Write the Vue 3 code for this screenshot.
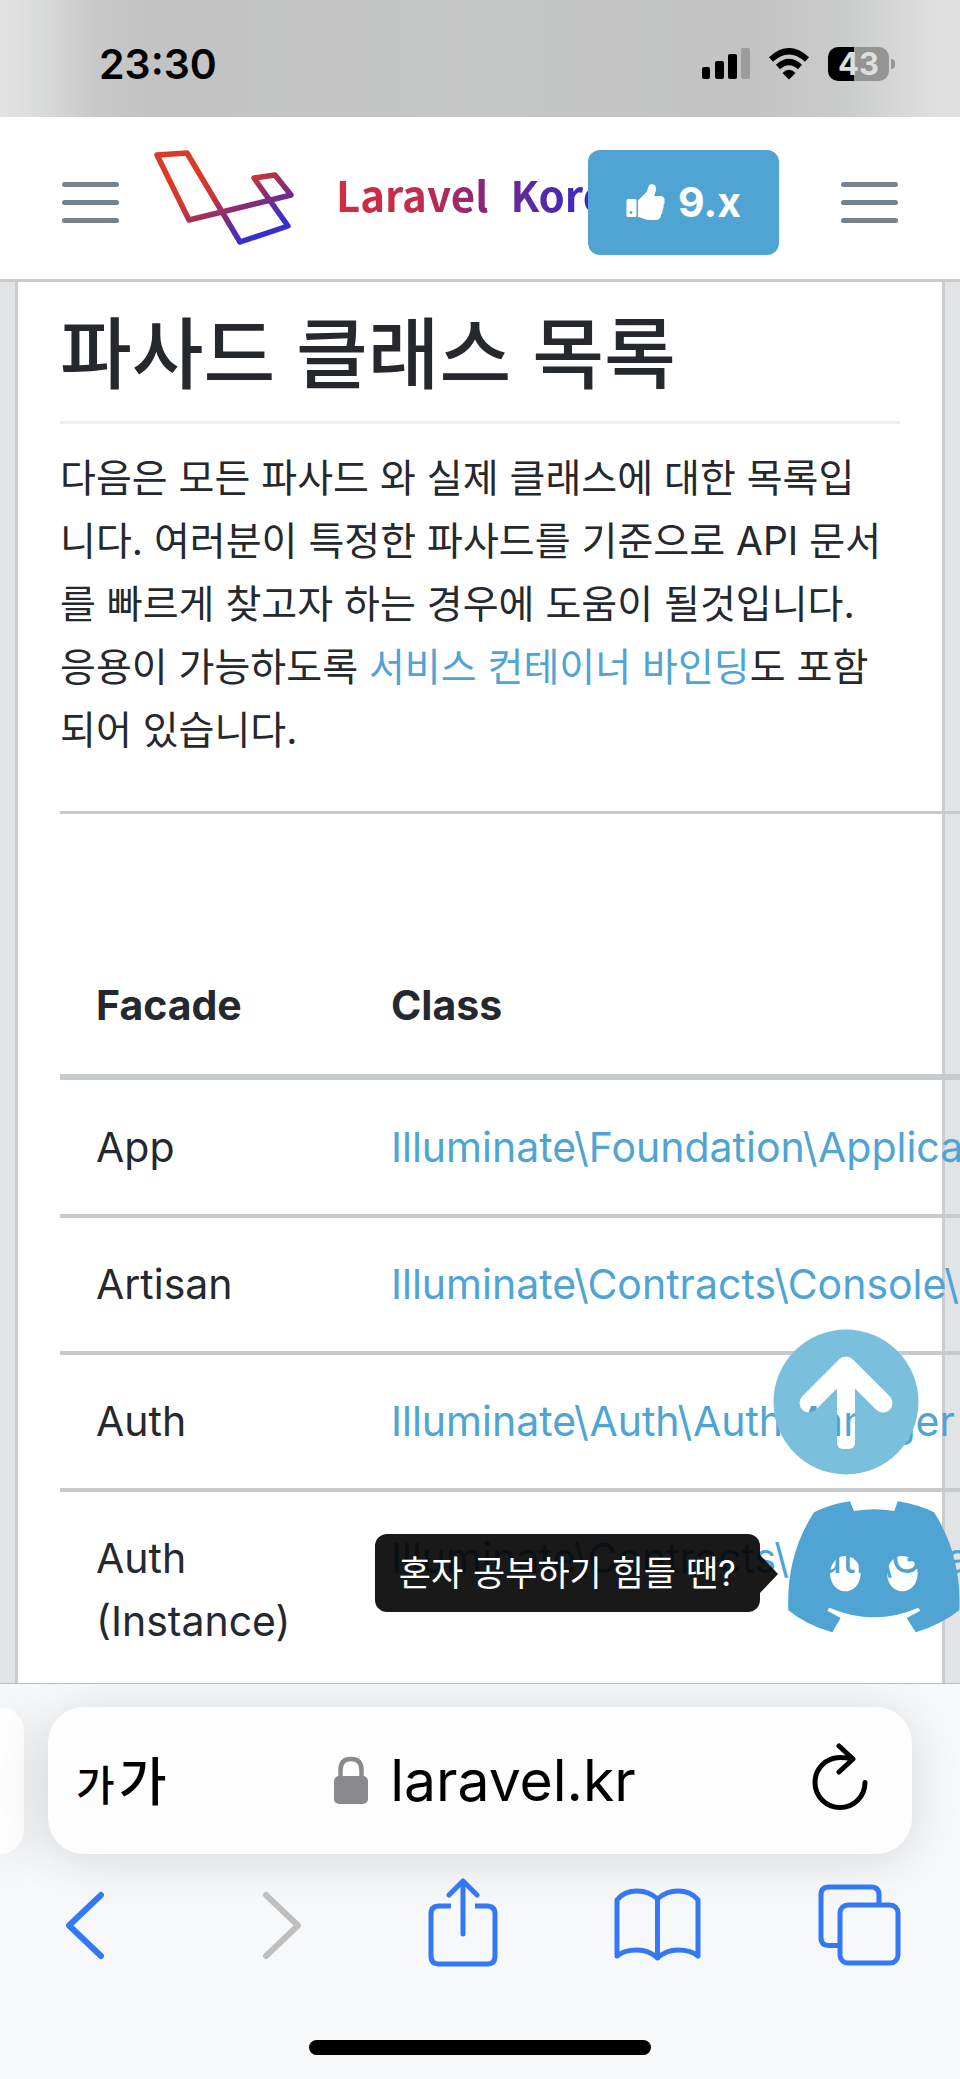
<script setup>
const rows = [
  { facade: 'App', target: 'Illuminate\\Foundation\\Application' },
  { facade: 'Artisan', target: 'Illuminate\\Contracts\\Console\\Kernel' },
  { facade: 'Auth', target: 'Illuminate\\Auth\\AuthManager' },
  { facade: 'Auth (Instance)', target: 'Illuminate\\Contracts\\Auth\\Guard' },
]
</script>

<template>
  <div class="phone">
    <div class="status">
      <span class="time">23:30</span>
      <div class="status-icons">
        <svg width="48" height="32" viewBox="0 0 48 32" aria-hidden="true">
          <rect x="0" y="19" width="8" height="12" rx="2" />
          <rect x="13" y="13" width="9" height="18" rx="2" />
          <rect x="26" y="6" width="9" height="25" rx="2" />
          <rect x="39" y="0" width="9" height="31" rx="2" fill="#9b9c9b" />
        </svg>
        <svg width="42" height="32" viewBox="0 0 42 32" aria-hidden="true">
          <path d="M3 11.500Q21 -5 39 11.500" fill="none" stroke="#000" stroke-width="6" />
          <path d="M10 19Q21 9 32 19" fill="none" stroke="#000" stroke-width="6" />
          <path d="M14.500 25Q21 18.500 27.500 25L21 31.500Z" />
        </svg>
        <span class="battery">43</span>
      </div>
    </div>

    <header class="nav">
      <button class="menu" type="button" aria-label="메뉴">
        <span></span><span></span><span></span>
      </button>
      <a class="brand" href="#">
        <svg width="142" height="98" viewBox="153 149 142 98" aria-hidden="true">
          <defs>
            <linearGradient id="logo-ink" gradientUnits="userSpaceOnUse" x1="215" y1="165" x2="250" y2="236">
              <stop offset="0" stop-color="#dc3a28" />
              <stop offset="0.350" stop-color="#c8353a" />
              <stop offset="0.650" stop-color="#822c78" />
              <stop offset="1" stop-color="#3730c8" />
            </linearGradient>
          </defs>
          <path d="M157 155L187 153L240 242L288 226L254 178L275 175L291 195L189 220Z" fill="none" stroke="url(#logo-ink)" stroke-width="5.500" stroke-linejoin="round" />
        </svg>
        <span class="wordmark"><span>Laravel</span><span>Korea</span></span>
      </a>
      <button class="version" type="button">
        <svg width="40" height="38" viewBox="0 0 40 38" aria-hidden="true">
          <path fill="#fff" fill-rule="evenodd" d="M2 16h7q1.500 0 1.500 1.500v15q0 1.500-1.500 1.500h-7q-1.500 0-1.500-1.500v-15q0-1.500 1.500-1.500zM5 28a1.500 1.500 0 1 0 .1 0z" />
          <path fill="#fff" d="M12 17.500L21 8.500Q22 3 24 1.500Q30 0 30 6Q30 9 28 13H34Q39 13 38.500 18Q39 20 37.500 22Q38 25 36.500 27Q37 30 35 31.500Q35 37 29 37H25Q21 37 17 35.500Q14 34 12 34Z" />
        </svg>
        9.x
      </button>
      <button class="menu" type="button" aria-label="사이드 메뉴">
        <span></span><span></span><span></span>
      </button>
    </header>

    <main class="page">
      <article class="doc">
        <h1>파사드 클래스 목록</h1>
        <p>
          다음은 모든 파사드 와 실제 클래스에 대한 목록입니다. 여러분이 특정한 파사드를 기준으로 API 문서를 빠르게 찾고자 하는 경우에 도움이 될것입니다. 응용이 가능하도록 <a href="#">서비스 컨테이너 바인딩</a>도 포함되어 있습니다.
        </p>
        <table>
          <thead>
            <tr><th class="name">Facade</th><th>Class</th></tr>
          </thead>
          <tbody>
            <tr v-for="row in rows" :key="row.facade">
              <td>{{ row.facade }}</td>
              <td><a href="#">{{ row.target }}</a></td>
            </tr>
          </tbody>
        </table>
      </article>

      <button class="to-top" type="button" aria-label="맨 위로">
        <svg width="146" height="146" viewBox="0 0 146 146" aria-hidden="true">
          <mask id="arrow-hole">
            <rect width="146" height="146" fill="#fff" />
            <path d="M36 74L73 37L110 74" fill="none" stroke="#000" stroke-width="19" stroke-linecap="round" stroke-linejoin="round" />
            <rect x="64" y="37" width="18" height="83" rx="6" fill="#000" />
          </mask>
          <circle cx="73" cy="73" r="72.500" fill="#7abfdb" mask="url(#arrow-hole)" />
        </svg>
      </button>
      <span id="discord-tip" class="tip" role="tooltip">혼자 공부하기 힘들 땐?</span>
      <a class="discord" href="#" aria-label="Discord" aria-describedby="discord-tip">
        <svg width="172" height="132" viewBox="144 602 516 396" aria-hidden="true">
          <path fill="#50a4d3" fill-rule="evenodd" d="M330 603L342 632Q403 621 463 632L473 603Q532 612 582 636Q665 765 658 930Q600 975 527 996L500 953L541 931L535 922Q403 980 268 922L262 931L302 953L277 996Q200 975 145 930Q138 765 222 636Q275 610 330 603ZM316 767a46 53 0 1 0 .1 0ZM487 767a46 53 0 1 0 .1 0Z" />
        </svg>
      </a>
    </main>

    <footer class="browser">
      <div class="address-row">
        <div class="peek"></div>
        <div class="address">
          <button class="text-size" type="button" aria-label="텍스트 크기"><small>가</small><span>가</span></button>
          <button class="url" type="button">
            <svg width="34" height="49" viewBox="0 0 34 49" aria-hidden="true">
              <path d="M6.500 22V14Q6.500 3 17 3Q27.500 3 27.500 14V22" fill="none" stroke="#8a8a8e" stroke-width="4.500" />
              <rect x="0" y="20" width="34" height="28" rx="5" fill="#8a8a8e" />
            </svg>
            laravel.kr
          </button>
          <button class="reload" type="button" aria-label="새로고침">
            <svg width="82" height="76" viewBox="811 1743 82 76" aria-hidden="true">
              <path d="M852 1759Q845 1757.500 839 1757.500A25 25 0 1 0 864 1782.500M838 1746L852 1759L838 1772" />
            </svg>
          </button>
        </div>
      </div>
      <nav class="tools" aria-label="브라우저 도구">
        <button type="button" aria-label="뒤로">
          <svg width="80" height="90" viewBox="66 1878 80 90"><path d="M101 1895L69 1925.500L101 1956" /></svg>
        </button>
        <button type="button" aria-label="앞으로" disabled>
          <svg width="50" height="90" viewBox="262 1878 50 90"><path d="M266 1895L298 1925.500L266 1956" /></svg>
        </button>
        <button type="button" aria-label="공유">
          <svg width="70" height="90" viewBox="428 1878 70 90">
            <path class="fine" stroke-linecap="butt" d="M451 1906H439Q431 1906 431 1914V1956Q431 1964 439 1964H487Q495 1964 495 1956V1914Q495 1906 487 1906H475" />
            <path class="fine" d="M463 1882V1934M449 1895L463 1881L477 1895" />
          </svg>
        </button>
        <button type="button" aria-label="책갈피">
          <svg width="88" height="90" viewBox="614 1878 88 90">
            <path class="fine" d="M657.500 1899Q649 1891 637 1891Q624 1891 617 1900V1956Q624 1950 637 1950Q649 1950 657.500 1958Q666 1950 678 1950Q691 1950 698 1956V1900Q691 1891 678 1891Q666 1891 657.500 1899V1958" />
          </svg>
        </button>
        <button type="button" aria-label="탭">
          <svg width="84" height="90" viewBox="818 1878 84 90">
            <path class="fine" stroke-linecap="butt" d="M838 1945.500H829Q821 1945.500 821 1937.500V1895Q821 1887 829 1887H871Q879 1887 879 1895V1905" />
            <rect class="fine" x="840" y="1905" width="58" height="58" rx="8" />
          </svg>
        </button>
      </nav>
      <div class="home"></div>
    </footer>
  </div>
</template>

<style>
body {
  margin: 0;
}
</style>

<style scoped>
* {
  box-sizing: border-box;
}
.phone {
  display: flex;
  flex-direction: column;
  height: 100vh;
  overflow: hidden;
  background: #fff;
  color: #25282c;
  font-family: Inter, "Noto Sans CJK KR", sans-serif;
}
button {
  margin: 0;
  padding: 0;
  border: 0;
  background: none;
  color: inherit;
  font: inherit;
}
svg {
  display: block;
  flex: none;
}
a {
  color: #50a4d3;
  text-decoration: none;
}

.status {
  display: flex;
  flex: none;
  align-items: center;
  justify-content: space-between;
  height: 117px;
  padding: 11px 65px 0 99px;
  background: linear-gradient(90deg, #e2e2e2 0, #dadcdb 4%, #c8c8c8 10%, #c3c3c3 16%, #c5c7c6 50%, #c3c3c3 78%, #cacccb 88%, #e0e0e0 98%);
  color: #000;
}
.time {
  font-size: 41px;
  font-weight: 600;
}
.status-icons {
  display: flex;
  align-items: center;
  gap: 18px;
}
.battery {
  position: relative;
  width: 61px;
  height: 34px;
  margin-right: 6px;
  border-radius: 10px;
  background: linear-gradient(90deg, #000 26px, #949494 26px);
  color: #dededd;
  font-size: 31px;
  font-weight: 700;
  line-height: 34px;
  text-align: center;
}
.battery::after {
  content: "";
  position: absolute;
  top: 12px;
  right: -6px;
  width: 4px;
  height: 10px;
  border-radius: 0 4px 4px 0;
  background: #949494;
}

.nav {
  display: flex;
  flex: none;
  align-items: center;
  height: 165px;
  padding: 9px 62px 0;
  border-bottom: 3px solid #c9cacc;
  background: #fff;
}
.menu {
  display: flex;
  flex: none;
  flex-direction: column;
  gap: 13px;
  width: 57px;
}
.menu span {
  height: 5px;
  border-radius: 3px;
  background: #76828d;
}
.brand {
  display: flex;
  flex: 1;
  align-items: center;
  gap: 41px;
  min-width: 0;
  height: 110px;
  margin-left: 34px;
  padding-bottom: 9px;
  overflow: hidden;
}
.wordmark {
  display: flex;
  flex: none;
  gap: 22px;
  margin-bottom: 8px;
  background: linear-gradient(90deg, #d12c42 0, #c02c50 30%, #7a2682 54%, #5a2aa0 65%, #3a28c4 88%);
  background-clip: text;
  -webkit-background-clip: text;
  color: transparent;
  font-family: "Noto Sans CJK KR", sans-serif;
  font-size: 42px;
  font-weight: 700;
  line-height: 60px;
}
.version {
  display: flex;
  flex: none;
  align-items: center;
  justify-content: center;
  gap: 12px;
  width: 191px;
  height: 105px;
  margin-right: 62px;
  padding-bottom: 2px;
  border-radius: 12px;
  background: #50a4d3;
  color: #fff;
  font-size: 41px;
  font-weight: 700;
}

.page {
  position: relative;
  flex: 1;
  min-height: 0;
  padding: 0 15px;
  overflow: hidden;
  background: #e2e3e5;
}
.doc {
  min-height: 100%;
  padding: 20px 42px 0;
  border: solid #cbccce;
  border-width: 0 3px;
  background: #fff;
}
h1 {
  margin: 0;
  padding-bottom: 14px;
  border-bottom: 3px solid #eee;
  font-size: 78px;
  font-weight: 500;
  line-height: 105px;
}
p {
  margin: 22px 0 50px;
  padding-right: 12px;
  font-size: 39px;
  line-height: 63px;
}
table {
  width: 1100px;
  border-collapse: separate;
  border-spacing: 0;
  table-layout: fixed;
  font-size: 41px;
  line-height: 63px;
  text-align: left;
}
th,
td {
  padding: 35px 36px;
  border-top: 4px solid #c6cacd;
  vertical-align: top;
  white-space: nowrap;
}
th {
  height: 269px;
  padding-bottom: 37px;
  border-top-width: 3px;
  border-bottom: 6px solid #c6cacd;
  font-weight: 700;
  vertical-align: bottom;
}
.name {
  width: 295px;
}
td:first-child {
  white-space: normal;
}
tbody tr:first-child td {
  padding-top: 36px;
  border-top: 0;
}

.to-top {
  position: absolute;
  right: 41px;
  bottom: 208px;
}
.discord {
  position: absolute;
  right: 0;
  bottom: 50px;
}
.tip {
  position: absolute;
  right: 200px;
  bottom: 71px;
  padding: 0 24px;
  border-radius: 12px;
  background: rgba(0, 0, 0, 0.9);
  color: #fff;
  font-size: 35px;
  line-height: 78px;
  white-space: nowrap;
}
.tip::after {
  content: "";
  position: absolute;
  top: 21px;
  left: 100%;
  border: solid transparent;
  border-width: 19px 0 19px 18px;
  border-left-color: rgba(0, 0, 0, 0.9);
}

.browser {
  display: flex;
  flex: none;
  flex-direction: column;
  height: 396px;
  border-top: 1px solid #bcbdbf;
  overflow: hidden;
  background: #f7f8f9;
}
.address-row {
  display: flex;
  gap: 24px;
  margin: 23px 48px 0 0;
}
.peek {
  width: 24px;
  height: 147px;
  border-radius: 0 32px 32px 0;
  background: #fdfdfd;
  box-shadow: 0 6px 50px rgba(0, 0, 0, 0.12);
}
.address {
  display: grid;
  flex: 1;
  grid-template-columns: 1fr auto 1fr;
  align-items: center;
  height: 147px;
  padding: 0 18px 0 28px;
  border-radius: 36px;
  background: #fdfdfd;
  box-shadow: 0 6px 50px rgba(0, 0, 0, 0.13);
  color: #000;
}
.text-size {
  display: flex;
  align-items: baseline;
  gap: 4px;
  padding-top: 8px;
  font-size: 52px;
  font-weight: 500;
  line-height: 80px;
}
.text-size small {
  font-size: 42px;
}
.url {
  display: flex;
  align-items: center;
  gap: 22px;
  font-size: 57px;
  line-height: 80px;
}
.reload {
  justify-self: end;
}
.reload path {
  fill: none;
  stroke: #000;
  stroke-width: 5;
  stroke-linecap: round;
  stroke-linejoin: round;
}
.tools {
  display: flex;
  justify-content: space-between;
  margin-top: 24px;
  padding: 0 58px 0 66px;
  color: #3478f6;
}
.tools button:disabled {
  color: #bfbfc0;
}
.tools svg {
  fill: none;
  stroke: currentColor;
  stroke-linecap: round;
  stroke-linejoin: round;
  stroke-width: 6;
}
.tools .fine {
  stroke-width: 5;
}
.home {
  width: 342px;
  height: 15px;
  margin: 72px auto 0;
  border-radius: 8px;
  background: #000;
}
</style>
